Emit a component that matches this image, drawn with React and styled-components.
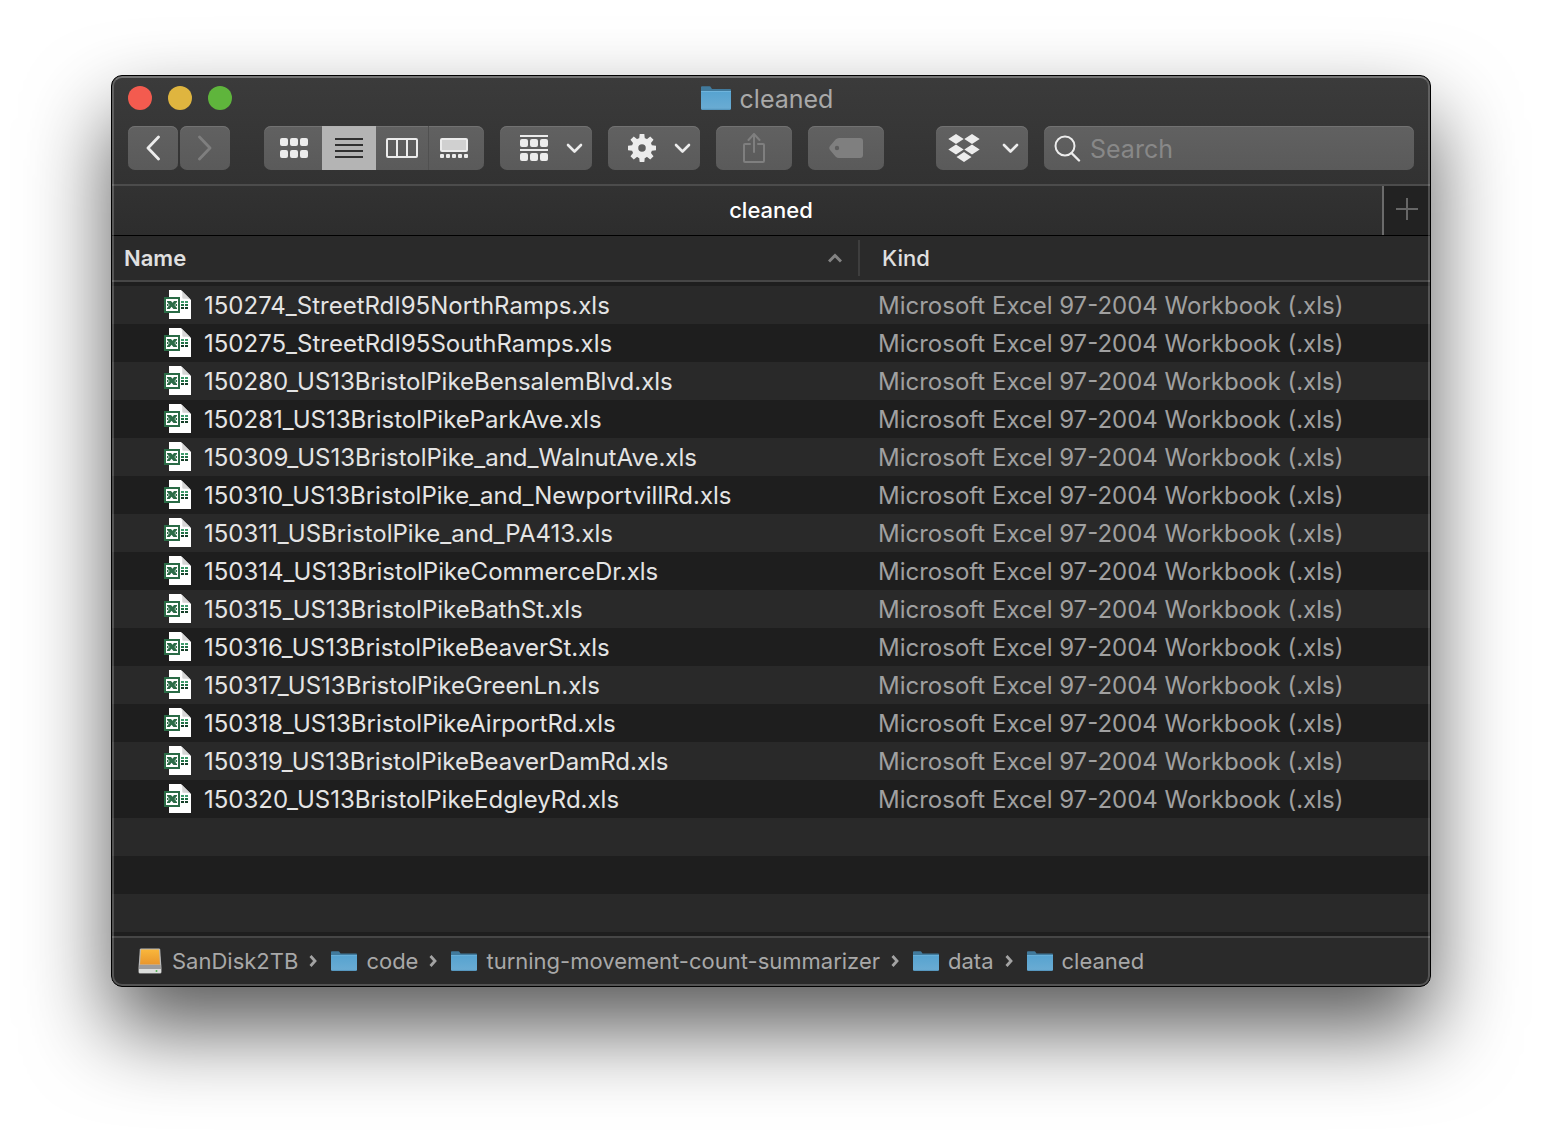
import React from "react";
import styled, { createGlobalStyle } from "styled-components";

const GlobalStyle = createGlobalStyle`
  *, *::before, *::after { box-sizing: border-box; }
  body {
    margin: 0;
    background: #fff;
    font-family: Inter, "Liberation Sans", sans-serif;
    -webkit-font-smoothing: antialiased;
  }
  button, input { font: inherit; color: inherit; }
`;

const Desktop = styled.main`
  padding: 75px 111px 147px;
`;

const Window = styled.section`
  position: relative;
  border: 1px solid #000;
  border-radius: 11px;
  overflow: hidden;
  background: #1e1e1e;
  color: #dfdfdf;

  &::after {
    content: "";
    position: absolute;
    inset: 0;
    border: 2px solid rgba(255, 255, 255, 0.2);
    border-top-color: rgba(255, 255, 255, 0.3);
    border-radius: 10px;
    pointer-events: none;
  }
`;

const Shadow = styled.div`
  border-radius: 11px;
  box-shadow: 0 42px 84px rgba(0, 0, 0, 0.65);
`;

const Chrome = styled.header`
  background: linear-gradient(#3b3b3b, #323232);
  border-bottom: 2px solid #4c4c4c;
  padding: 10px 16px 14px;
`;

const TitleBar = styled.div`
  display: grid;
  grid-template-columns: 1fr auto 1fr;
  align-items: center;
  height: 24px;
  margin-bottom: 16px;
`;

const Lights = styled.div`
  display: flex;
  gap: 16px;
`;

const Light = styled.button`
  width: 24px;
  height: 24px;
  padding: 0;
  border: 0;
  border-radius: 50%;
  background: ${(p) => p.$color};
`;

const Title = styled.h1`
  display: flex;
  align-items: flex-start;
  gap: 9px;
  height: 24px;
  margin: 0;
  padding-right: 8px;
  font-size: 25px;
  line-height: 26px;
  font-weight: 400;
  color: #a9a9a9;
`;

const Toolbar = styled.div`
  display: flex;
  gap: 16px;
`;

const NavPair = styled.div`
  display: flex;
  gap: 2px;
  margin-right: 18px;
`;

const ToolButton = styled.button`
  display: flex;
  align-items: center;
  justify-content: ${(p) => (p.$menu ? "space-between" : "center")};
  flex: none;
  width: ${(p) => p.$width}px;
  height: 44px;
  padding: ${(p) => (p.$menu ? "0 9px 0 " + p.$menu + "px" : "0")};
  border: 0;
  border-radius: 7px;
  background: linear-gradient(#616161, #5a5a5a);
  box-shadow: inset 0 1px 0 #727272;
  color: ${(p) => (p.disabled ? "#7f7f7f" : "#ececec")};
`;

const Segmented = styled.div`
  display: flex;
  flex: none;
  border-radius: 7px;
  overflow: hidden;
  background: linear-gradient(#616161, #5a5a5a);
  box-shadow: inset 0 1px 0 #727272;
`;

const Segment = styled.button`
  display: flex;
  align-items: center;
  justify-content: center;
  width: ${(p) => p.$width}px;
  height: 44px;
  padding: 0;
  border: 0;
  border-left: ${(p) => (p.$divider ? "1px solid #505050" : "0")};
  background: ${(p) => (p["aria-pressed"] ? "#b4b4b4" : "transparent")};
  color: ${(p) => (p["aria-pressed"] ? "#303030" : "#ececec")};
  &:first-child { padding-left: 2px; }
  &:last-child { padding-right: 6px; }
`;

const Spacer = styled.div`
  flex: 1;
`;

const SearchBox = styled.label`
  display: flex;
  align-items: center;
  gap: 9px;
  flex: 0 1 370px;
  min-width: 0;
  height: 44px;
  padding: 0 10px;
  border-radius: 7px;
  background: linear-gradient(#616161, #5a5a5a);
  box-shadow: inset 0 1px 0 #727272;
  color: #ececec;
`;

const SearchInput = styled.input`
  flex: 1;
  min-width: 0;
  padding: 2px 0 0;
  border: 0;
  outline: 0;
  background: none;
  font-size: 25px;
  line-height: 32px;
  &::placeholder { color: #888; opacity: 1; }
`;

const TabBar = styled.div`
  display: flex;
  height: 50px;
  border-bottom: 1px solid #000;
`;

const Tab = styled.button`
  flex: 1;
  padding: 0 0 2px 48px;
  border: 0;
  border-right: 2px solid #6b6b6b;
  background: linear-gradient(#323232, #2d2d2d);
  color: #fff;
  font-size: 22px;
  font-weight: 500;
`;

const NewTab = styled.button`
  display: flex;
  align-items: center;
  justify-content: center;
  width: 46px;
  padding: 0 0 4px;
  border: 0;
  background: #222;
  color: #666;
`;

const FileTable = styled.table`
  width: 100%;
  table-layout: fixed;
  border-collapse: separate;
  border-spacing: 0;
  margin-bottom: 4px;
  tbody::before {
    content: "";
    display: table-row;
    height: 4px;
  }
`;

const ColumnHead = styled.th`
  width: ${(p) => (p.$width ? p.$width + "px" : "auto")};
  height: 46px;
  padding: 4px 0;
  border-bottom: 2px solid #464646;
  background: #2a2a2a;
  text-align: left;
  font-size: 22px;
  font-weight: ${(p) => (p.$sorted ? 600 : 500)};
`;

const HeadInner = styled.div`
  display: flex;
  align-items: center;
  justify-content: space-between;
  height: 36px;
  padding: ${(p) => (p.$sorted ? "0 16px 0 12px" : "0 22px")};
  border-right: ${(p) => (p.$sorted ? "2px solid #3e3e3e" : "0")};
  color: #e0e0e0;
`;

const Row = styled.tr`
  height: 38px;
  background: #1e1e1e;
  &:nth-child(odd) { background: #292929; }
`;

const Cell = styled.td`
  padding: 0 0 0 ${(p) => p.$indent}px;
  font-size: 24px;
  white-space: nowrap;
  color: ${(p) => (p.$dim ? "#a0a0a0" : "#e4e4e4")};
`;

const CellBody = styled.div`
  display: flex;
  gap: 13px;
  height: 38px;
  line-height: 40px;
  svg { margin-top: 4px; }
`;

const PathBar = styled.nav`
  border-top: 2px solid #464646;
  background: #2a2a2a;
`;

const Crumbs = styled.ol`
  display: flex;
  align-items: center;
  gap: 14px;
  height: 48px;
  margin: 0;
  padding: 0 26px 2px;
  list-style: none;
`;

const Crumb = styled.li`
  display: flex;
  align-items: center;
  gap: 11px;
  color: #a3a3a3;
`;

const CrumbLink = styled.a`
  display: flex;
  align-items: center;
  gap: 9px;
  color: #a8a8a8;
  font-size: 22px;
  line-height: 28px;
  text-decoration: none;
  white-space: nowrap;
`;

const Folder = ({ width, height }) => (
  <svg width={width} height={height} viewBox="0 0 30 24" preserveAspectRatio="none" aria-hidden="true">
    <defs>
      <linearGradient id="folderFront" x1="0" y1="0" x2="0" y2="1">
        <stop offset="0" stopColor="#56a3d0" />
        <stop offset="0.9" stopColor="#69abd3" />
        <stop offset="1" stopColor="#4f8fb6" />
      </linearGradient>
    </defs>
    <path d="M0 1.5Q0 .2 1 .2H8.500Q9.500 .2 10 1.500L11 3H29Q30 3 30 4V9H0Z" fill="#417a9c" />
    <path d="M0 5H30V22.500Q30 24 28.500 24H1.500Q0 24 0 22.500Z" fill="url(#folderFront)" />
    <path d="M0 5.500H30" stroke="#6fb4dc" />
  </svg>
);

const Drive = () => (
  <svg width="25" height="26" viewBox="0 0 25 26" aria-hidden="true">
    <defs>
      <linearGradient id="driveTop" x1="0" y1="0" x2="0" y2="1">
        <stop offset="0" stopColor="#f9b73c" />
        <stop offset="1" stopColor="#e8962c" />
      </linearGradient>
    </defs>
    <path d="M3 0.500H21Q22 .5 22.200 1.500L23.500 20V24Q23.500 25.500 22 25.500H2Q.5 25.500 .5 24V20L1.800 1.500Q2 .5 3 .5Z" fill="#b9b9b9" />
    <path d="M3 1.500H21L22 16.500H2Z" fill="url(#driveTop)" />
    <path d="M1.500 17H22.500L23 21H1Z" fill="#9c9c9c" />
    <path d="M1 21H23V24Q23 25 22 25H2Q1 25 1 24Z" fill="#dcdedc" />
    <circle cx="18.500" cy="23" r="1" fill="#58b558" />
  </svg>
);

const Workbook = () => (
  <svg width="27" height="29" viewBox="0 0 27 29" aria-hidden="true">
    <path d="M5 0H17L27 10V29H5Z" fill="#fff" />
    <path d="M17 0C19 2 18 6 18.500 8.500C21 9 25 8 27 10Z" fill="#d6d6d6" />
    <path d="M17 11h3v2h-3zM21 11h3v2h-3z" fill="#3f9c6c" />
    <path d="M17 14h3v2h-3zM21 14h3v2h-3z" fill="#1f7145" />
    <path d="M17 17h3v2h-3zM21 17h3v2h-3z" fill="#153f29" />
    <path d="M0 7H16V23H0Z" fill="#2a6b46" />
    <path d="M2 9H14V21H2Z" fill="#fff" />
    <path d="M3 11H7L8.500 12.800L10 11H13V12L10.500 15L13 18V19H9.500L7.500 16.800L5.800 19H3V18L5.600 15L3 12Z" fill="#2a6b46" />
    <path d="M11.500 14H13V16H11.500ZM3 14H4.500V16H3Z" fill="#2a6b46" />
  </svg>
);

const stroke = { fill: "none", stroke: "currentColor", strokeLinecap: "round", strokeLinejoin: "round" };

const Arrow = ({ forward }) => (
  <svg width="14" height="26" viewBox="0 0 14 26" aria-hidden="true">
    <path d={forward ? "M1.500 2L12 13L1.500 24" : "M12.500 2L2 13L12.500 24"} {...stroke} strokeWidth="2.800" />
  </svg>
);

const Caret = () => (
  <svg width="17" height="11" viewBox="0 0 17 11" aria-hidden="true">
    <path d="M2 2L8.500 8.500L15 2" {...stroke} strokeWidth="2.600" />
  </svg>
);

const GridIcon = () => (
  <svg width="28" height="20" viewBox="0 0 28 20" fill="currentColor" aria-hidden="true">
    {[0, 12].map((y) => [0, 10, 20].map((x) => <rect key={x + "-" + y} x={x} y={y} width="8" height="8" rx="2" />))}
  </svg>
);

const ListIcon = () => (
  <svg width="28" height="20" viewBox="0 0 28 20" fill="currentColor" aria-hidden="true">
    <path d="M0 0H28V2H0ZM0 6H28V8H0ZM0 12H28V14H0ZM0 18H28V20H0Z" />
  </svg>
);

const ColumnsIcon = () => (
  <svg width="32" height="20" viewBox="0 0 32 20" aria-hidden="true">
    <path d="M2 1H30Q31 1 31 2V18Q31 19 30 19H2Q1 19 1 18V2Q1 1 2 1ZM11 1V19M21 1V19" fill="none" stroke="currentColor" strokeWidth="2" />
  </svg>
);

const GalleryIcon = () => (
  <svg width="28" height="20" viewBox="0 0 28 20" fill="currentColor" aria-hidden="true">
    <rect x="1" y="1" width="26" height="12" rx="1" fill="#d0d0d0" stroke="currentColor" strokeWidth="2" />
    {[0, 6, 12, 18, 24].map((x) => <rect key={x} x={x} y="16" width="4" height="4" rx="1" />)}
  </svg>
);

const GroupIcon = () => (
  <svg width="28" height="28" viewBox="0 0 28 28" fill="currentColor" aria-hidden="true">
    <path d="M0 1H28V3H0ZM0 15H28V17H0Z" />
    {[5, 19].map((y) => [0, 10, 20].map((x) => <rect key={x + "-" + y} x={x} y={y} width="8" height="8" rx="2" />))}
  </svg>
);

const GearIcon = () => (
  <svg width="28" height="28" viewBox="-14 -14 28 28" aria-hidden="true">
    <circle r="7" fill="none" stroke="currentColor" strokeWidth="6.500" />
    {[0, 45, 90, 135, 180, 225, 270, 315].map((a) => (
      <path key={a} d="M-3 -8L-2.300 -14H2.300L3 -8Z" fill="currentColor" transform={`rotate(${a})`} />
    ))}
  </svg>
);

const ShareIcon = () => (
  <svg width="24" height="32" viewBox="0 0 24 32" aria-hidden="true">
    <path d="M8 12H3Q2 12 2 13V29Q2 30 3 30H21Q22 30 22 29V13Q22 12 21 12H16M12 20V2M6.500 8L12 2L17.500 8" {...stroke} strokeWidth="2" />
  </svg>
);

const TagIcon = () => (
  <svg width="34" height="20" viewBox="0 0 34 20" aria-hidden="true">
    <path fillRule="evenodd" d="M10 0H31Q34 0 34 3V17Q34 20 31 20H10Q8 20 6.500 18.500L1 12Q-.5 10 1 8L6.500 1.500Q8 0 10 0ZM8 7.800A2.200 2.200 0 1 0 8 12.200A2.200 2.200 0 1 0 8 7.800Z" fill="currentColor" />
  </svg>
);

const DropboxIcon = () => (
  <svg width="32" height="28" viewBox="0 0 32 28" fill="currentColor" aria-hidden="true">
    <path d="M8 0L15.700 5L8 10L.3 5ZM24 0L31.700 5L24 10L16.300 5ZM8 10.600L15.700 15.600L8 20.600L.3 15.600ZM24 10.600L31.700 15.600L24 20.600L16.300 15.600ZM16 18L23.500 23L16 28L8.500 23Z" />
  </svg>
);

const SearchIcon = () => (
  <svg width="27" height="28" viewBox="0 0 27 28" aria-hidden="true">
    <circle cx="11" cy="12" r="9.500" {...stroke} strokeWidth="2" />
    <path d="M17.500 19L25 26.500" {...stroke} strokeWidth="2.400" />
  </svg>
);

const SortIcon = () => (
  <svg width="14" height="10" viewBox="0 0 14 10" aria-hidden="true">
    <path d="M1 8.500L7 2.500L13 8.500" fill="none" stroke="#838383" strokeWidth="3" />
  </svg>
);

const PlusIcon = () => (
  <svg width="22" height="22" viewBox="0 0 22 22" fill="currentColor" aria-hidden="true">
    <path d="M0 10H22V12H0ZM10 0H12V22H10Z" />
  </svg>
);

const CrumbArrow = () => (
  <svg width="8" height="12" viewBox="0 0 8 12" aria-hidden="true">
    <path d="M1.500 1L6 6L1.500 11" fill="none" stroke="currentColor" strokeWidth="2.800" />
  </svg>
);

const KIND = "Microsoft Excel 97-2004 Workbook (.xls)";

const FILES = [
  "150274_StreetRdI95NorthRamps.xls",
  "150275_StreetRdI95SouthRamps.xls",
  "150280_US13BristolPikeBensalemBlvd.xls",
  "150281_US13BristolPikeParkAve.xls",
  "150309_US13BristolPike_and_WalnutAve.xls",
  "150310_US13BristolPike_and_NewportvillRd.xls",
  "150311_USBristolPike_and_PA413.xls",
  "150314_US13BristolPikeCommerceDr.xls",
  "150315_US13BristolPikeBathSt.xls",
  "150316_US13BristolPikeBeaverSt.xls",
  "150317_US13BristolPikeGreenLn.xls",
  "150318_US13BristolPikeAirportRd.xls",
  "150319_US13BristolPikeBeaverDamRd.xls",
  "150320_US13BristolPikeEdgleyRd.xls",
];

const EMPTY_ROWS = [0, 1, 2];

const PATH = ["SanDisk2TB", "code", "turning-movement-count-summarizer", "data", "cleaned"];

export default function App() {
  return (
    <Desktop>
      <GlobalStyle />
      <Shadow>
        <Window>
          <Chrome>
            <TitleBar>
              <Lights>
                <Light $color="#f35b4f" aria-label="Close" />
                <Light $color="#dfb53f" aria-label="Minimize" />
                <Light $color="#5fb53c" aria-label="Zoom" />
              </Lights>
              <Title>
                <Folder width={30} height={24} />
                cleaned
              </Title>
            </TitleBar>
            <Toolbar>
              <NavPair>
                <ToolButton $width={50} aria-label="Back"><Arrow /></ToolButton>
                <ToolButton $width={50} aria-label="Forward" disabled><Arrow forward /></ToolButton>
              </NavPair>
              <Segmented role="group" aria-label="View">
                <Segment $width={58} aria-label="Icons" aria-pressed={false}><GridIcon /></Segment>
                <Segment $width={54} aria-label="List" aria-pressed={true}><ListIcon /></Segment>
                <Segment $width={52} aria-label="Columns" aria-pressed={false}><ColumnsIcon /></Segment>
                <Segment $width={56} $divider aria-label="Gallery" aria-pressed={false}><GalleryIcon /></Segment>
              </Segmented>
              <ToolButton $width={92} $menu={20} aria-label="Group items" aria-haspopup="menu"><GroupIcon /><Caret /></ToolButton>
              <ToolButton $width={92} $menu={20} aria-label="Actions" aria-haspopup="menu"><GearIcon /><Caret /></ToolButton>
              <ToolButton $width={76} aria-label="Share" disabled><ShareIcon /></ToolButton>
              <ToolButton $width={76} aria-label="Edit tags" disabled><TagIcon /></ToolButton>
              <Spacer />
              <ToolButton $width={92} $menu={12} aria-label="Dropbox" aria-haspopup="menu"><DropboxIcon /><Caret /></ToolButton>
              <SearchBox>
                <SearchIcon />
                <SearchInput type="search" placeholder="Search" aria-label="Search" />
              </SearchBox>
            </Toolbar>
          </Chrome>

          <TabBar>
            <Tab>cleaned</Tab>
            <NewTab aria-label="New tab"><PlusIcon /></NewTab>
          </TabBar>

          <FileTable>
            <thead>
              <tr>
                <ColumnHead $width={748} $sorted scope="col" aria-sort="ascending">
                  <HeadInner $sorted>Name<SortIcon /></HeadInner>
                </ColumnHead>
                <ColumnHead scope="col">
                  <HeadInner>Kind</HeadInner>
                </ColumnHead>
              </tr>
            </thead>
            <tbody>
              {FILES.map((name) => (
                <Row key={name}>
                  <Cell $indent={52}><CellBody><Workbook />{name}</CellBody></Cell>
                  <Cell $indent={18} $dim><CellBody>{KIND}</CellBody></Cell>
                </Row>
              ))}
              {EMPTY_ROWS.map((n) => (
                <Row key={n} aria-hidden="true"><Cell colSpan={2} /></Row>
              ))}
            </tbody>
          </FileTable>

          <PathBar aria-label="Path">
            <Crumbs>
              {PATH.map((name, i) => (
                <Crumb key={name}>
                  <CrumbLink href={"#" + name}>
                    {i === 0 ? <Drive /> : <Folder width={26} height={20} />}
                    {name}
                  </CrumbLink>
                  {i < PATH.length - 1 && <CrumbArrow />}
                </Crumb>
              ))}
            </Crumbs>
          </PathBar>
        </Window>
      </Shadow>
    </Desktop>
  );
}
